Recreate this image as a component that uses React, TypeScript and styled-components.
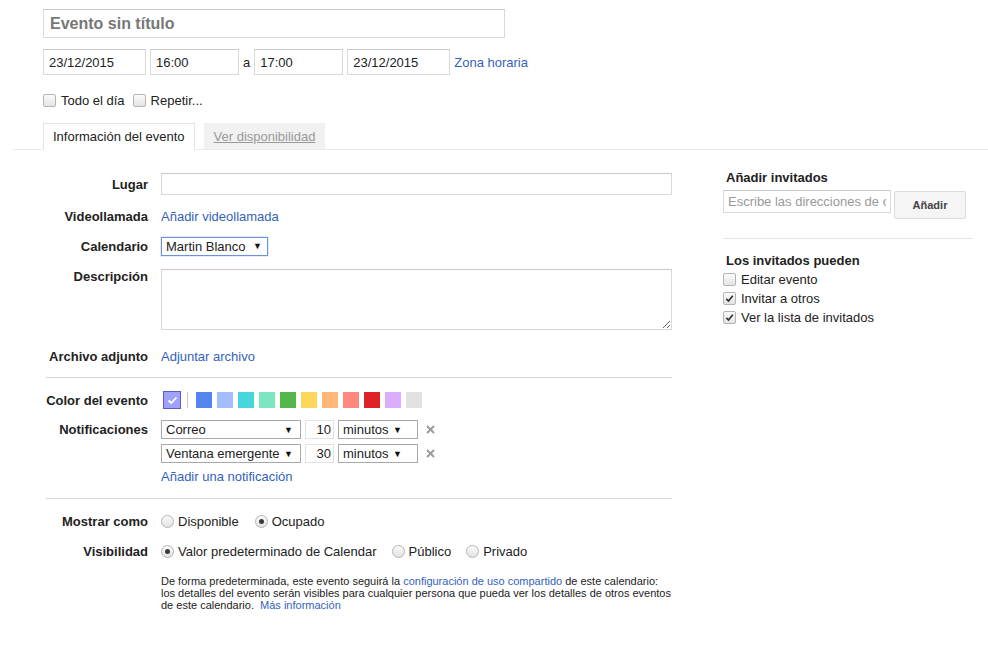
import React from "react";
import styled, { createGlobalStyle } from "styled-components";

const GlobalStyle = createGlobalStyle`
  html, body { margin: 0; padding: 0; background: #fff; }
  body {
    font-family: "Liberation Sans", Arial, sans-serif;
    font-size: 13px;
    color: #222;
  }
  * { box-sizing: border-box; }
`;

const Page = styled.div`
  width: 988px;
  min-height: 656px;
  padding-top: 9px;
`;

const Header = styled.div`
  padding-left: 43px;
`;

const TitleInput = styled.input`
  display: block;
  width: 462px;
  height: 29px;
  border: 1px solid #d9d9d9;
  border-top-color: #c8c8c8;
  padding: 0 6px;
  font-family: "Liberation Sans", Arial, sans-serif;
  font-size: 16px;
  font-weight: bold;
  color: #777;
  outline: none;
  &::placeholder { color: #777; }
`;

const DateRow = styled.div`
  display: flex;
  align-items: center;
  gap: 4px;
  margin-top: 11px;
  height: 26px;
`;

const FieldInput = styled.input<{ $w: number }>`
  width: ${(p) => p.$w}px;
  height: 26px;
  border: 1px solid #d9d9d9;
  border-top-color: #c8c8c8;
  padding: 0 5px;
  font-family: "Liberation Sans", Arial, sans-serif;
  font-size: 13px;
  color: #222;
  outline: none;
`;

const Sep = styled.span`
  color: #222;
`;

const Link = styled.a`
  color: #3362bc;
  text-decoration: none;
  cursor: pointer;
`;

const OptionsRow = styled.div`
  display: flex;
  align-items: center;
  margin-top: 17px;
  height: 16px;
`;

const CheckLabel = styled.label<{ $gap?: number; $mr?: number }>`
  display: inline-flex;
  align-items: center;
  gap: ${(p) => p.$gap ?? 5}px;
  margin-right: ${(p) => p.$mr ?? 0}px;
  color: #222;
  line-height: 19px;
`;

const BoxEl = styled.span`
  display: inline-flex;
  align-items: center;
  justify-content: center;
  width: 13px;
  height: 13px;
  border: 1px solid #b4b4b4;
  border-radius: 2px;
  background: linear-gradient(#fbfbfb, #e4e4e4);
`;

const RadioEl = styled.span`
  display: inline-flex;
  align-items: center;
  justify-content: center;
  width: 13px;
  height: 13px;
  border: 1px solid #b4b4b4;
  border-radius: 50%;
  background: linear-gradient(#fbfbfb, #e2e2e2);
`;

const RadioDot = styled.span`
  width: 5px;
  height: 5px;
  border-radius: 50%;
  background: #3a3a3a;
`;

const Checkbox = ({ checked }: { checked?: boolean }) => (
  <BoxEl>
    {checked && (
      <svg width="9" height="9" viewBox="0 0 9 9">
        <path d="M1.3 4.8 L3.5 7 L7.8 1.8" fill="none" stroke="#333" strokeWidth="1.7" />
      </svg>
    )}
  </BoxEl>
);

const Radio = ({ checked }: { checked?: boolean }) => (
  <RadioEl>{checked && <RadioDot />}</RadioEl>
);

const TabBar = styled.div`
  display: flex;
  align-items: flex-end;
  gap: 9px;
  margin-top: 15px;
  margin-left: 13px;
  padding-left: 30px;
  height: 27px;
  border-bottom: 1px solid #ebebeb;
`;

const Tab = styled.div<{ $active?: boolean }>`
  height: 27px;
  padding: 0 9px;
  display: flex;
  align-items: center;
  margin-bottom: -1px;
  background: ${(p) => (p.$active ? "#fff" : "#f1f1f1")};
  border: 1px solid ${(p) => (p.$active ? "#e3e3e3" : "#f1f1f1")};
  border-bottom: 1px solid ${(p) => (p.$active ? "#fff" : "#ebebeb")};
  color: ${(p) => (p.$active ? "#222" : "#999")};
  text-decoration: ${(p) => (p.$active ? "none" : "underline")};
`;

const Body = styled.div`
  display: flex;
  align-items: flex-start;
`;

const Form = styled.div`
  width: 626px;
  margin-left: 46px;
  padding-top: 23px;
`;

const Row = styled.div<{ $mt?: number; $h?: number }>`
  display: grid;
  grid-template-columns: 102px 1fr;
  column-gap: 13px;
  align-items: center;
  margin-top: ${(p) => p.$mt ?? 0}px;
  min-height: ${(p) => p.$h ?? 22}px;
`;

const Label = styled.div<{ $top?: boolean; $lh?: number }>`
  text-align: right;
  font-weight: bold;
  color: #222;
  white-space: nowrap;
  align-self: ${(p) => (p.$top ? "start" : "center")};
  line-height: ${(p) => p.$lh ?? 15}px;
`;

const WideInput = styled.input`
  width: 511px;
  height: 22px;
  border: 1px solid #d9d9d9;
  border-top-color: #c8c8c8;
  outline: none;
`;

const TextArea = styled.textarea`
  display: block;
  width: 511px;
  height: 61px;
  border: 1px solid #d9d9d9;
  border-top-color: #c8c8c8;
  outline: none;
  resize: both;
  font-family: "Liberation Sans", Arial, sans-serif;
`;

const Select = styled.div<{ $w: number; $blue?: boolean; $arrowPad?: number }>`
  display: inline-flex;
  align-items: center;
  width: ${(p) => p.$w}px;
  height: 19px;
  padding: 0 ${(p) => p.$arrowPad ?? 6}px 0 4px;
  border: 1px solid ${(p) => (p.$blue ? "#6a93da" : "#a8a8a8")};
  box-shadow: ${(p) => (p.$blue ? "0 0 0 0.5px rgba(106,147,218,0.35)" : "none")};
  background: #fff;
  color: #222;
  white-space: nowrap;
`;

const Arrow = styled.span`
  margin-left: auto;
  font-size: 9px;
  color: #111;
`;

const NumBox = styled.div`
  width: 29px;
  height: 19px;
  border: 1px solid #e2e2e2;
  padding-right: 2px;
  text-align: right;
  line-height: 17px;
  color: #222;
`;

const Divider = styled.div<{ $mt: number }>`
  height: 1px;
  margin-top: ${(p) => p.$mt}px;
  background: #d6d6d6;
`;

const Swatches = styled.div`
  display: flex;
  align-items: center;
  padding-left: 2px;
`;

const SelectedSwatch = styled.div`
  width: 18px;
  height: 18px;
  border: 1px solid #5b5bd0;
  background: #a0a1f8;
  display: flex;
  align-items: center;
  justify-content: center;
`;

const SwatchSep = styled.div`
  width: 1px;
  height: 16px;
  background: #c8c8c8;
  margin: 0 8px 0 6px;
`;

const Swatch = styled.div<{ $c: string }>`
  width: 16px;
  height: 16px;
  margin-right: 5px;
  background: ${(p) => p.$c};
`;

const NotifList = styled.div`
  display: flex;
  flex-direction: column;
  gap: 5px;
`;

const NotifRow = styled.div`
  display: flex;
  align-items: center;
  gap: 4px;
`;

const RemoveBtn = styled.span`
  display: inline-flex;
  margin-left: 4px;
`;

const AddLink = styled.div`
  line-height: 16px;
  margin-top: 6px;
`;

const Radios = styled.div`
  display: flex;
  align-items: center;
`;

const RadioLabel = styled.label<{ $mr: number }>`
  display: inline-flex;
  align-items: center;
  gap: 4px;
  margin-right: ${(p) => p.$mr}px;
  color: #222;
`;

const Help = styled.div`
  font-size: 11px;
  line-height: 12px;
  margin-top: 1px;
  color: #222;
  white-space: nowrap;
`;

const Side = styled.div`
  width: 250px;
  margin-left: 51px;
  padding-top: 20px;
`;

const SideTitle = styled.div<{ $mt?: number }>`
  font-weight: bold;
  line-height: 15px;
  margin-top: ${(p) => p.$mt ?? 0}px;
  padding-left: 3px;
  color: #222;
`;

const InviteRow = styled.div`
  display: flex;
  align-items: flex-start;
  gap: 3px;
  margin-top: 5px;
`;

const InviteInput = styled.input`
  width: 168px;
  height: 23px;
  border: 1px solid #d9d9d9;
  border-top-color: #c8c8c8;
  padding: 0 4px;
  font-family: "Liberation Sans", Arial, sans-serif;
  font-size: 13px;
  outline: none;
  &::placeholder { color: #999; }
`;

const Button = styled.button`
  width: 72px;
  height: 28px;
  margin-top: 1px;
  border: 1px solid #dcdcdc;
  border-radius: 2px;
  background: #f5f5f5;
  font-family: "Liberation Sans", Arial, sans-serif;
  font-size: 11px;
  font-weight: bold;
  color: #444;
`;

const SideDivider = styled.div`
  height: 1px;
  background: #e5e5e5;
  margin-top: 19px;
`;

const PermList = styled.div`
  display: flex;
  flex-direction: column;
  margin-top: 2px;
`;

const colors = [
  "#5484ed",
  "#a4bdfc",
  "#46d6db",
  "#7ae7bf",
  "#51b749",
  "#fbd75b",
  "#ffb878",
  "#ff887c",
  "#dc2127",
  "#dbadff",
  "#e1e1e1",
];

const XIcon = () => (
  <svg width="9" height="9" viewBox="0 0 9 9">
    <path d="M1 1 L8 8 M8 1 L1 8" stroke="#9a9a9a" strokeWidth="1.8" />
  </svg>
);

export default function App() {
  return (
    <Page>
      <GlobalStyle />
      <Header>
        <TitleInput placeholder="Evento sin título" />
        <DateRow>
          <FieldInput $w={103} defaultValue="23/12/2015" />
          <FieldInput $w={89} defaultValue="16:00" />
          <Sep>a</Sep>
          <FieldInput $w={89} defaultValue="17:00" />
          <FieldInput $w={103} defaultValue="23/12/2015" />
          <Link>Zona horaria</Link>
        </DateRow>
        <OptionsRow>
          <CheckLabel $mr={8}>
            <Checkbox />
            Todo el día
          </CheckLabel>
          <CheckLabel>
            <Checkbox />
            Repetir...
          </CheckLabel>
        </OptionsRow>
      </Header>

      <TabBar>
        <Tab $active>Información del evento</Tab>
        <Tab>Ver disponibilidad</Tab>
      </TabBar>

      <Body>
        <Form>
          <Row>
            <Label>Lugar</Label>
            <WideInput />
          </Row>
          <Row $mt={10}>
            <Label>Videollamada</Label>
            <div>
              <Link>Añadir videollamada</Link>
            </div>
          </Row>
          <Row $mt={8}>
            <Label>Calendario</Label>
            <div>
              <Select $w={107} $blue $arrowPad={5}>
                Martin Blanco
                <Arrow>▼</Arrow>
              </Select>
            </div>
          </Row>
          <Row $mt={12}>
            <Label $top>Descripción</Label>
            <TextArea />
          </Row>
          <Row $mt={15}>
            <Label>Archivo adjunto</Label>
            <div>
              <Link>Adjuntar archivo</Link>
            </div>
          </Row>
          <Divider $mt={10} />
          <Row $mt={11}>
            <Label>Color del evento</Label>
            <Swatches>
              <SelectedSwatch>
                <svg width="11" height="9" viewBox="0 0 11 9">
                  <path d="M1.5 4.5 L4.2 7 L9.5 1.5" fill="none" stroke="#fff" strokeWidth="1.8" />
                </svg>
              </SelectedSwatch>
              <SwatchSep />
              {colors.map((c) => (
                <Swatch key={c} $c={c} />
              ))}
            </Swatches>
          </Row>
          <Row $mt={9}>
            <Label $top $lh={19}>
              Notificaciones
            </Label>
            <div>
              <NotifList>
                <NotifRow>
                  <Select $w={140} $arrowPad={7}>
                    Correo
                    <Arrow>▼</Arrow>
                  </Select>
                  <NumBox>10</NumBox>
                  <Select $w={80} $arrowPad={15}>
                    minutos
                    <Arrow>▼</Arrow>
                  </Select>
                  <RemoveBtn>
                    <XIcon />
                  </RemoveBtn>
                </NotifRow>
                <NotifRow>
                  <Select $w={140} $arrowPad={7}>
                    Ventana emergente
                    <Arrow>▼</Arrow>
                  </Select>
                  <NumBox>30</NumBox>
                  <Select $w={80} $arrowPad={15}>
                    minutos
                    <Arrow>▼</Arrow>
                  </Select>
                  <RemoveBtn>
                    <XIcon />
                  </RemoveBtn>
                </NotifRow>
              </NotifList>
              <AddLink>
                <Link>Añadir una notificación</Link>
              </AddLink>
            </div>
          </Row>
          <Divider $mt={13} />
          <Row $mt={11}>
            <Label>Mostrar como</Label>
            <Radios>
              <RadioLabel $mr={16}>
                <Radio />
                Disponible
              </RadioLabel>
              <RadioLabel $mr={0}>
                <Radio checked />
                Ocupado
              </RadioLabel>
            </Radios>
          </Row>
          <Row $mt={8}>
            <Label>Visibilidad</Label>
            <Radios>
              <RadioLabel $mr={15}>
                <Radio checked />
                Valor predeterminado de Calendar
              </RadioLabel>
              <RadioLabel $mr={15}>
                <Radio />
                Público
              </RadioLabel>
              <RadioLabel $mr={0}>
                <Radio />
                Privado
              </RadioLabel>
            </Radios>
          </Row>
          <Row $mt={12}>
            <div />
            <Help>
              De forma predeterminada, este evento seguirá la <Link>configuración de uso compartido</Link> de este
              calendario:
              <br />
              los detalles del evento serán visibles para cualquier persona que pueda ver los detalles de otros
              eventos
              <br />
              de este calendario.&nbsp; <Link>Más información</Link>
            </Help>
          </Row>
        </Form>

        <Side>
          <SideTitle>Añadir invitados</SideTitle>
          <InviteRow>
            <InviteInput placeholder="Escribe las direcciones de correo" />
            <Button>Añadir</Button>
          </InviteRow>
          <SideDivider />
          <SideTitle $mt={14}>Los invitados pueden</SideTitle>
          <PermList>
            <CheckLabel>
              <Checkbox />
              Editar evento
            </CheckLabel>
            <CheckLabel>
              <Checkbox checked />
              Invitar a otros
            </CheckLabel>
            <CheckLabel>
              <Checkbox checked />
              Ver la lista de invitados
            </CheckLabel>
          </PermList>
        </Side>
      </Body>
    </Page>
  );
}
